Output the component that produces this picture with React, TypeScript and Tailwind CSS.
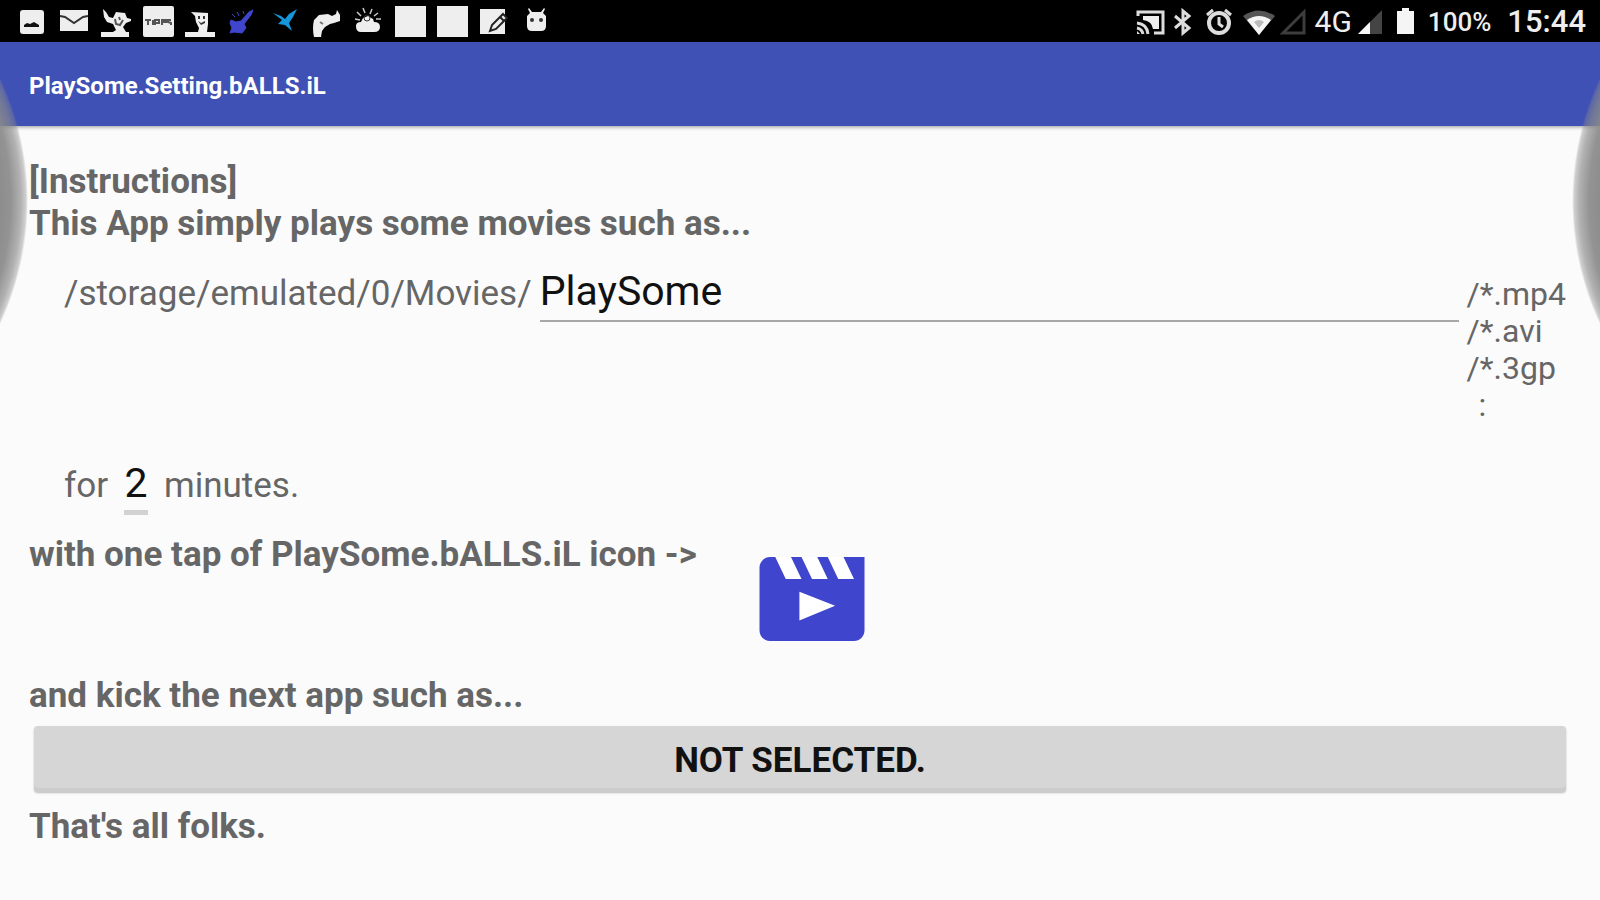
import type { ReactNode } from "react";

const EXTENSIONS = ["/*.mp4", "/*.avi", "/*.3gp"];

export default function App() {
  return (
    <div className="relative min-h-screen overflow-hidden bg-[#fbfbfb] font-[Roboto,sans-serif] text-[#666666]">
      <StatusBar />
      <header className="flex h-[84px] items-center bg-[#3f51b5] px-[29px] pt-1 shadow-[0_1px_4px_rgba(0,0,0,0.4)]">
        <h1 className="text-[24px] leading-8 font-bold text-white">PlaySome.Setting.bALLS.iL</h1>
      </header>
      <main className="px-[29px] pt-[35px] text-[35px] leading-[42px]">
        <p className="font-bold">[Instructions]</p>
        <p className="font-bold">This App simply plays some movies such as...</p>

        <div className="mt-[22px] flex items-baseline pr-[5px] pl-[35px]">
          <label htmlFor="folder">/storage/emulated/0/Movies/</label>
          <input
            className="ml-2 min-w-0 flex-1 border-b-2 border-[#a8a8a8] bg-transparent pb-[5px] text-[41px] leading-[48px] text-[#111111] outline-none"
            defaultValue="PlaySome"
            id="folder"
            type="text"
          />
          <ul className="ml-2 text-[32px] leading-[37px]">
            {EXTENSIONS.map((extension) => (
              <li key={extension}>{extension}</li>
            ))}
            <li className="pl-3">:</li>
          </ul>
        </div>

        <div className="mt-[35px] flex items-baseline pl-[35px]">
          <label htmlFor="minutes">for</label>
          <input
            className="mx-4 w-6 border-b-[5px] border-[#d2d2d2] bg-transparent pb-[3px] text-center text-[41px] leading-[48px] text-[#111111] outline-none"
            defaultValue="2"
            id="minutes"
            inputMode="numeric"
            type="text"
          />
          <span>minutes.</span>
        </div>

        <div className="mt-[19px] flex items-start">
          <p className="font-bold">with one tap of PlaySome.bALLS.iL icon -&gt;</p>
          <MovieIcon />
        </div>

        <p className="mt-[34px] font-bold">and kick the next app such as...</p>
        <div className="px-[5px] pt-[9px] pb-[14px]">
          <button
            className="block h-[66px] w-full rounded-sm bg-[#d6d6d6] pt-1 font-bold text-[#111111] shadow-[inset_0_-4px_0_#cccccc,0_1px_2px_rgba(0,0,0,0.25)]"
            type="button"
          >
            NOT SELECTED.
          </button>
        </div>
        <p className="font-bold">That's all folks.</p>
      </main>
      <EdgeGlow className="left-0" />
      <EdgeGlow className="right-0 -scale-x-100" />
    </div>
  );
}

function EdgeGlow({ className }: { className: string }) {
  return (
    <svg
      aria-hidden="true"
      className={`pointer-events-none absolute top-[75px] ${className}`}
      height="256"
      viewBox="0 0 28 256"
      width="28"
    >
      <defs>
        <radialGradient cx="-262" cy="126" gradientUnits="userSpaceOnUse" id="edge" r="290">
          <stop offset="0.9" stopColor="#8a8a8a" stopOpacity="0.98" />
          <stop offset="0.94" stopColor="#8a8a8a" stopOpacity="0.92" />
          <stop offset="0.975" stopColor="#8a8a8a" stopOpacity="0.65" />
          <stop offset="0.992" stopColor="#8a8a8a" stopOpacity="0.4" />
          <stop offset="1" stopColor="#8a8a8a" stopOpacity="0" />
        </radialGradient>
      </defs>
      <circle cx="-262" cy="126" fill="url(#edge)" r="290" />
    </svg>
  );
}

function MovieIcon() {
  return (
    <svg aria-hidden="true" className="mt-[23px] ml-[62px]" height="84" viewBox="2 4 20 16" width="106">
      <path d="M5 4h15v5H5zM9 10h8v7H9z" fill="#ffffff" />
      <path
        d="M18 4l2 4.2h-3L15 4h-2l2 4.2h-3L10 4H8l2 4.2H7L5 4H4C2.900 4 2 4.900 2 6v12c0 1.100.9 2 2 2h16c1.100 0 2-.9 2-2V4zM9.600 10.600l6.800 2.700-6.800 2.800z"
        fill="#3f45cc"
        fillRule="evenodd"
      />
    </svg>
  );
}

function Glyph({ children }: { children: ReactNode }) {
  return (
    <svg aria-hidden="true" className="size-8 shrink-0" fill="#eeeeee" viewBox="0 0 32 32">
      {children}
    </svg>
  );
}

function StatusBar() {
  return (
    <div className="flex h-[42px] items-center justify-between bg-black pt-[2px] pr-[14px] pl-4 text-[#eeeeee]">
      <div className="flex items-center gap-[10px]">
        <Glyph>
          <rect height="24" rx="3" width="24" x="4" y="4" />
          <path d="M8 21v-2l3-2 3 1 4-2 5 3v2z" fill="#111111" />
        </Glyph>
        <Glyph>
          <path d="M2 4h28v21H2z" />
          <path d="M2 10l5 1 9 6 9-6 5-1" fill="none" stroke="#333333" strokeWidth="2" />
        </Glyph>
        <Glyph>
          <path d="M3 3l3 3 3 5 4 1 3-6 9 1 2 5 4 1v2l-5 2-3 4 3 5h3v5H1v-5h12l3-2-3-6-6-2-3-5z" />
          <path d="M15 13l1 5 4 1 3-5M19 11l1 3" fill="none" stroke="#555555" strokeWidth="2" />
        </Glyph>
        <Glyph>
          <rect height="31" rx="2" width="31" x="1" y="0" />
          <path
            d="M3 14h6M6 14v5M11 14v5M13 19v-5h4v3h-3M20 19v-5h4v2h-3M29 14h-3v2l3 1v2"
            fill="none"
            stroke="#555555"
            strokeWidth="2"
          />
        </Glyph>
        <Glyph>
          <path d="M7 6l17 1v11l-1 8h8v5H1v-5h13l1-4-3-6-1-6z" />
          <path d="M14 10h2v3h-2zM19 10h2v3h-2zM14 15l3 2 4-2v2l-4 2z" fill="#333333" />
        </Glyph>
        <Glyph>
          <path
            d="M5 14l5 2 5-1 8-9 4-2-2 5-7 9 2 4-4 5-8-1-4 1 2-5-2-5zM6 8l3 3M11 6l2 4M17 5l1 3"
            fill="#3f45cc"
            stroke="#3f45cc"
          />
        </Glyph>
        <Glyph>
          <path d="M5 7l8 3 4 3 4-5 8-5-4 8-4 6 3 8-7-6-7-1 4-4z" fill="#1596dc" />
        </Glyph>
        <Glyph>
          <path d="M4 14l5-5 9-1 4 2 4-2 1-4 3 5v6l-6 2-4 1-5 3-3 4-1 6H4q-2-9 0-17z" />
          <path d="M10 16l3 2" stroke="#777777" strokeWidth="2" />
        </Glyph>
        <Glyph>
          <path d="M4 20q0-4 5-4l2-4 5-2 5 3 1 3q6 0 6 5 0 5-6 5H9q-5 0-5-6z" />
          <path
            d="M5 6l4 4M11 2l2 5M20 3l-2 5M26 7l-4 3M3 13l5 1M24 13l5 0"
            stroke="#cccccc"
            strokeWidth="1.5"
          />
          <circle cx="15" cy="12" fill="none" r="3" stroke="#333333" />
        </Glyph>
        <Glyph>
          <path d="M1 0h31v31H1z" />
        </Glyph>
        <Glyph>
          <path d="M1 0h31v31H1z" />
        </Glyph>
        <Glyph>
          <path d="M2 3h25v25H2z" />
          <path d="M12 25l2-6L25 8l4 4-11 11z" stroke="#222222" strokeWidth="2" />
          <path d="M22 11l4 4" stroke="#222222" strokeWidth="2" />
        </Glyph>
        <Glyph>
          <path d="M9 2l3 4h9l3-4 1 1-2 4 3 3v10q0 5-5 5h-9q-5 0-5-5V10l3-3-2-4z" />
          <circle cx="12" cy="14" fill="#333333" r="2" />
          <circle cx="21" cy="14" fill="#333333" r="2" />
        </Glyph>
      </div>

      <div className="flex items-center">
        <svg aria-hidden="true" className="size-8" fill="none" viewBox="0 0 32 32">
          <path d="M3 10V6h25v21h-9" stroke="#dddddd" strokeWidth="3" />
          <path d="M8 10h16v13h-6q-1-8-10-9z" fill="#eeeeee" />
          <path d="M2 17q10 1 11 11M2 22q5 1 6 6" stroke="#dddddd" strokeWidth="3" />
          <path d="M2 28v-3l3 3z" fill="#dddddd" />
        </svg>
        <svg aria-hidden="true" className="ml-1 h-8 w-6" fill="none" viewBox="0 0 24 32">
          <path d="M4 10l14 12-6 5V5l6 5L4 22" stroke="#dddddd" strokeWidth="3" />
        </svg>
        <svg aria-hidden="true" className="ml-2 size-8" fill="none" viewBox="0 0 32 32">
          <circle cx="16" cy="17" r="10" stroke="#dddddd" strokeWidth="4" />
          <path d="M16 11v7l4 3M4 9l6-5M28 9l-6-5" stroke="#dddddd" strokeWidth="3" />
        </svg>
        <svg aria-hidden="true" className="ml-2 size-8" viewBox="0 0 32 32">
          <path d="M0 10q16-11 32 0L16 29z" fill="#555555" />
          <path d="M4 14q12-8 24 0L16 29z" fill="#f5f5f5" />
          <path d="M11 16q5-4 10 0l-5 6z" fill="#bbbbbb" />
        </svg>
        <svg aria-hidden="true" className="ml-1 size-7" fill="none" viewBox="0 0 28 28">
          <path d="M4 25L25 4v21z" stroke="#3d3d3d" strokeWidth="3" />
        </svg>
        <span className="ml-2 text-[30px] leading-8">4G</span>
        <svg aria-hidden="true" className="ml-1 size-7" viewBox="0 0 28 28">
          <path d="M2 26L26 2v24z" fill="#444444" />
          <path d="M2 26l12-12v12z" fill="#f5f5f5" />
        </svg>
        <svg aria-hidden="true" className="ml-3 h-8 w-5" viewBox="0 0 20 32">
          <path d="M1 5h5V2h7v3h5v23H1z" fill="#f5f5f5" />
        </svg>
        <span className="ml-3 text-[26px] leading-8 font-medium">100%</span>
        <span className="ml-4 text-[31px] leading-8 font-medium">15:44</span>
      </div>
    </div>
  );
}
